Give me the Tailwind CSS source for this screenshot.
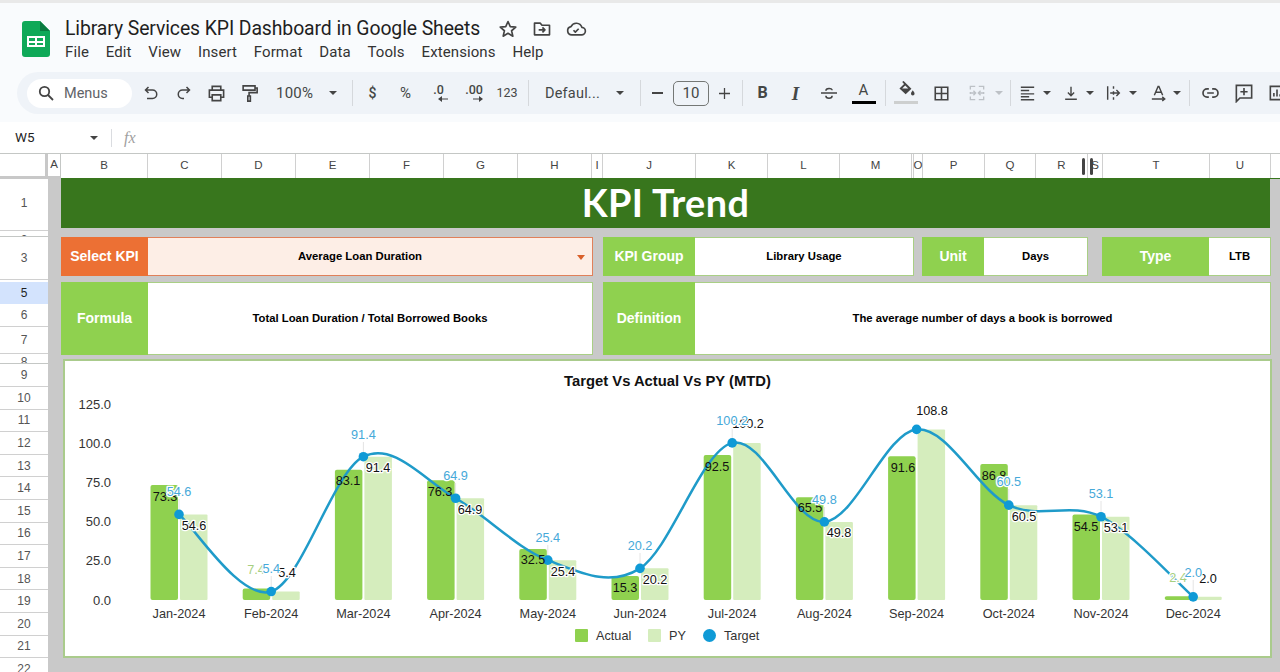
<!DOCTYPE html>
<html lang="en">
<head>
<meta charset="UTF-8">
<title>Library Services KPI Dashboard in Google Sheets</title>
<script src="https://cdn.jsdelivr.net/npm/@tailwindcss/browser@4"></script>
</head>
<body class="w-[1280px] h-[672px] overflow-hidden bg-white font-['Roboto',sans-serif] text-[#444746]">

<!-- title + menus -->
<div class="h-[72px] bg-[#f9fbfd] border-t-[3px] border-[#e9e9e9] flex pl-[22px]">
  <svg class="mt-[18px] w-[28px] h-[36px]" viewBox="0 0 28 36">
    <path d="M3 0H18L28 10V33a3 3 0 0 1-3 3H3a3 3 0 0 1-3-3V3a3 3 0 0 1 3-3z" fill="#0fa958"/>
    <path d="M18 0L28 10H18z" fill="#0a7a40"/>
    <path d="M5 15H23V26H5zM7 17V20H13V17zM15 17V20H21V17zM7 22V24H13V22zM15 22V24H21V22z" fill="#fff" fill-rule="evenodd"/>
  </svg>
  <div class="ml-[15px]">
    <div class="flex items-center h-[28px] mt-[12px]">
      <div class="text-[19.4px] text-[#1f1f1f] leading-none tracking-[-0.1px] w-[433px] whitespace-nowrap">Library Services KPI Dashboard in Google Sheets</div>
      <svg class="w-[20px] h-[20px]" viewBox="0 0 24 24" fill="none" stroke="#444" stroke-width="2" stroke-linejoin="round"><path d="M12 3l2.7 6.1 6.6.6-5 4.4 1.5 6.5L12 17.2l-5.8 3.4 1.5-6.5-5-4.4 6.6-.6z"/></svg>
      <svg class="ml-[14px] w-[20px] h-[20px]" viewBox="0 0 24 24" fill="none" stroke="#444" stroke-width="2" stroke-linejoin="round"><path d="M3 5h7l2 2.5h9V19H3z"/><path d="M8 13h7M12.5 10l3 3-3 3"/></svg>
      <svg class="ml-[13px] w-[22px] h-[20px]" viewBox="0 0 24 24" fill="none" stroke="#444" stroke-width="2" stroke-linejoin="round"><path d="M7 19a5 5 0 0 1-1-9.900A7 7 0 0 1 19 10a4.500 4.500 0 0 1-.5 9z"/><path d="M9 13.500l2.200 2.200 4-4"/></svg>
    </div>
    <div class="flex gap-[16.800px] text-[15px] leading-none mt-[2px] text-[#333] tracking-[0.1px]">
      <span>File</span><span>Edit</span><span>View</span><span>Insert</span><span>Format</span><span>Data</span><span>Tools</span><span>Extensions</span><span>Help</span>
    </div>
  </div>
</div>

<!-- toolbar -->
<div class="h-[50px] bg-[#f9fbfd] pl-[17px] pb-[8px] overflow-hidden">
  <div class="h-[42px] bg-[#eff3f8] rounded-l-[21px] flex items-center pl-[10px] text-[#444746] w-[1400px]">
    <div class="w-[105px] h-[29px] bg-white rounded-full flex items-center pl-[11px] shrink-0">
      <svg class="w-[16px] h-[16px]" viewBox="0 0 16 16" fill="none" stroke="#444" stroke-width="1.800"><circle cx="6.500" cy="6.500" r="4.700"/><path d="M10 10l5 5"/></svg>
      <span class="ml-[10px] mt-[1px] text-[14.5px] text-[#5f6368]">Menus</span>
    </div>
    <div class="ml-[2px] w-[33px] flex justify-center"><svg class="w-[16px] h-[16px]" viewBox="0 0 16 16" fill="none" stroke="#444" stroke-width="1.500"><path d="M5.500 2L2.500 5l3 3M3 5h6.500a4 4 0 0 1 0 8.500H4"/></svg></div>
    <div class="w-[33px] flex justify-center"><svg class="w-[16px] h-[16px]" viewBox="0 0 16 16" fill="none" stroke="#444" stroke-width="1.500"><path d="M10.500 2l3 3-3 3M13 5H6.500a4 4 0 0 0 0 8.500H8"/></svg></div>
    <div class="w-[33px] flex justify-center"><svg class="w-[19px] h-[19px]" viewBox="0 0 20 20" fill="none" stroke="#444" stroke-width="1.700"><path d="M5.500 6V2.500h9V6M5.500 14H2.500V6.500h15V14h-3M5.500 11.500h9v6h-9z"/></svg></div>
    <div class="w-[33px] flex justify-center"><svg class="w-[17px] h-[19px]" viewBox="0 0 20 22" fill="none" stroke="#444" stroke-width="1.900"><path d="M2.500 2h14v5h-14zM16.500 4.500H19V10H9.500v4M8 14h3v6H8z"/></svg></div>
    <div class="w-[56px] pl-[10px] mt-[1px] text-[15px] tracking-[0.2px]">100%</div>
    <div class="w-[22px] flex justify-center"><div class="w-0 h-0 border-x-[4.500px] border-x-transparent border-t-[4.500px] border-t-[#444]"></div></div>
    <div class="ml-[8px] w-px h-[26px] bg-[#d5d8dc]"></div>
    <div class="ml-[3px] w-[33px] text-center text-[14px] font-medium">$</div>
    <div class="w-[33px] text-center text-[15px]">%</div>
    <div class="w-[33px] flex flex-col items-center text-[12.500px] font-medium leading-[12px]"><span>.0</span><svg class="w-[10px] h-[6px] ml-[8px]" viewBox="0 0 10 6" fill="#444"><path d="M10 2.400H4V0L0 3l4 3V3.600h6z"/></svg></div>
    <div class="w-[38px] flex flex-col items-center text-[12.500px] font-medium leading-[12px]"><span>.00</span><svg class="w-[10px] h-[6px] ml-[8px]" viewBox="0 0 10 6" fill="#444"><path d="M0 2.400H6V0l4 3-4 3V3.600H0z"/></svg></div>
    <div class="w-[28px] text-center text-[12.500px]">123</div>
    <div class="ml-[7px] w-px h-[26px] bg-[#d5d8dc]"></div>
    <div class="ml-[16px] w-[60px] mt-[1px] text-[14.500px] tracking-[0.2px] whitespace-nowrap">Defaul...</div>
    <div class="ml-[4px] w-[22px] flex justify-center"><div class="w-0 h-0 border-x-[4.500px] border-x-transparent border-t-[4.500px] border-t-[#444]"></div></div>
    <div class="ml-[9px] w-px h-[26px] bg-[#d5d8dc]"></div>
    <div class="ml-[4px] w-[24px] flex justify-center"><div class="w-[11px] h-[1.500px] bg-[#444]"></div></div>
    <div class="ml-[4px] w-[36px] h-[25px] border border-[#747775] rounded-[5px] flex items-center justify-center text-[15px]">10</div>
    <div class="ml-[3px] w-[24px] flex justify-center"><svg class="w-[11px] h-[11px]" viewBox="0 0 13 13" stroke="#444" stroke-width="1.500"><path d="M0 6.500h13M6.500 0v13"/></svg></div>
    <div class="ml-[6px] w-px h-[26px] bg-[#d5d8dc]"></div>
    <div class="ml-[3px] w-[33px] text-center text-[16px] font-bold">B</div>
    <div class="w-[33px] text-center text-[19px] leading-none font-bold italic font-['Liberation_Serif',serif]">I</div>
    <div class="w-[33px] flex justify-center"><svg class="w-[18px] h-[16px]" viewBox="0 0 20 18" fill="none" stroke="#444" stroke-width="1.700"><path d="M1 9h18M6.500 6.500C6.500 3 13.500 3 13.500 6M6.500 12c0 3.800 7 3.800 7 0"/></svg></div>
    <div class="ml-[2px] w-[33px] h-[26px] flex flex-col items-center"><span class="text-[15px] leading-[19px] mt-[1px]">A</span><div class="w-[24px] h-[3px] bg-black mt-[1px]"></div></div>
    <div class="ml-[5px] w-px h-[26px] bg-[#d5d8dc]"></div>
    <div class="ml-[3px] w-[34px] h-[26px] flex flex-col items-center">
      <svg class="w-[18px] h-[16px] ml-[2px] mt-[1px]" viewBox="0 0 20 18" fill="#444"><path d="M5 0.500L6.200 0l2 2L15 8.800 8.500 15 1.500 8.500 6.700 3.400 5 1.700zM8 5L4.500 8.500h7z"/><path d="M16.500 10.500c1 1.500 2 2.600 2 3.800a2 2 0 0 1-4 0c0-1.200 1-2.300 2-3.800z"/></svg>
      <div class="w-[24px] h-[3px] bg-[#cdcfcf] mt-[4px]"></div>
    </div>
    <div class="ml-[1px] w-[34px] flex justify-center"><svg class="w-[15px] h-[15px]" viewBox="0 0 18 18" fill="none" stroke="#444" stroke-width="1.900"><path d="M1.500 1.500h15v15h-15zM9 1.500v15M1.500 9h15"/></svg></div>
    <div class="ml-[5px] w-[28px] flex justify-center"><svg class="w-[16px] h-[16px]" viewBox="0 0 18 18" fill="none" stroke="#bdc1c6" stroke-width="1.500"><path d="M7 1.500H1.500V5M1.500 8v2M1.500 13v3.500H7M11 1.500h5.500V5M16.500 8v2M16.500 13v3.500H11M1.500 9H7M5 6.500L7.500 9 5 11.500M16.500 9H11M13 6.500L10.500 9l2.500 2.500"/></svg></div>
    <div class="w-[16px] flex justify-center"><div class="w-0 h-0 border-x-[4.500px] border-x-transparent border-t-[4.500px] border-t-[#bdc1c6]"></div></div>
    <div class="ml-[3px] w-px h-[26px] bg-[#d5d8dc]"></div>
    <div class="ml-[3px] w-[26px] flex justify-center"><svg class="w-[15px] h-[16px]" viewBox="0 0 18 18" stroke="#444" stroke-width="1.700"><path d="M1 2h16M1 6h10M1 10h16M1 13.500h10M1 17h16"/></svg></div>
    <div class="w-[14px] flex justify-center"><div class="w-0 h-0 border-x-[4.500px] border-x-transparent border-t-[4.500px] border-t-[#444]"></div></div>
    <div class="ml-[5px] w-[24px] flex justify-center"><svg class="w-[14px] h-[16px]" viewBox="0 0 18 18" fill="none" stroke="#444" stroke-width="1.800"><path d="M1.500 17h15M9 1v11M5 8.500l4 4 4-4"/></svg></div>
    <div class="w-[14px] flex justify-center"><div class="w-0 h-0 border-x-[4.500px] border-x-transparent border-t-[4.500px] border-t-[#444]"></div></div>
    <div class="ml-[4px] w-[24px] flex justify-center"><svg class="w-[15px] h-[16px]" viewBox="0 0 18 18" fill="none" stroke="#444" stroke-width="1.700"><path d="M2 1v16M9 1v3M9 7v4M9 14v3M5 9h11M12.500 5.500L16 9l-3.500 3.500"/></svg></div>
    <div class="ml-[1px] w-[14px] flex justify-center"><div class="w-0 h-0 border-x-[4.500px] border-x-transparent border-t-[4.500px] border-t-[#444]"></div></div>
    <div class="ml-[6px] w-[24px] flex justify-center"><svg class="w-[15px] h-[17px]" viewBox="0 0 18 20" fill="none" stroke="#444" stroke-width="1.700"><path d="M4 12L8.500 1.500h1L14 12M5.500 8.500h7M1 16.500h15M13.500 14l3 2.500-3 2.500"/></svg></div>
    <div class="w-[14px] flex justify-center"><div class="w-0 h-0 border-x-[4.500px] border-x-transparent border-t-[4.500px] border-t-[#444]"></div></div>
    <div class="ml-[5px] w-px h-[26px] bg-[#d5d8dc]"></div>
    <div class="ml-[4px] w-[33px] flex justify-center"><svg class="w-[17px] h-[10px]" viewBox="0 0 20 12" fill="none" stroke="#444" stroke-width="2"><path d="M8 1H6a5 5 0 0 0 0 10h2M12 1h2a5 5 0 0 1 0 10h-2M6 6h8"/></svg></div>
    <div class="w-[33px] flex justify-center"><svg class="w-[18px] h-[19px]" viewBox="0 0 20 21" fill="none" stroke="#444" stroke-width="1.800"><path d="M1.500 1.500h17v14H5.500l-4 4zM10 4.500v8M6 8.500h8"/></svg></div>
    <div class="w-[33px] flex justify-center"><svg class="w-[16px] h-[16px]" viewBox="0 0 18 18" fill="none" stroke="#444" stroke-width="1.800"><path d="M1.500 1.500h15v15h-15zM5.500 13V9M9 13V5M12.500 13v-2.500"/></svg></div>
  </div>
</div>

<!-- formula bar -->
<div class="h-[31px] bg-white flex items-center text-[13.500px] text-[#1f1f1f]">
  <div class="w-[90px] pl-[15px]">W5</div>
  <div class="w-0 h-0 border-x-[4.500px] border-x-transparent border-t-[4.500px] border-t-[#444]"></div>
  <div class="ml-[13px] w-px h-[18px] bg-[#dadce0]"></div>
  <div class="ml-[12px] text-[16px] italic text-[#a0a0a0] font-['Liberation_Serif',serif]">fx</div>
</div>

<!-- column headers -->
<div class="h-[26px] flex bg-white border-t border-[#c4c7c5] text-[11.500px] text-[#444] font-['Liberation_Sans',sans-serif] overflow-hidden relative">
  <div class="w-[45px] shrink-0 border-b-[3px] border-[#c8c8c8]"></div>
  <div class="w-[3px] shrink-0 bg-[#c8c8c8]"></div>
  <div class="w-[13px] shrink-0 flex items-center justify-center border-r border-[#c4c7c5] border-b-[3px] border-b-[#c8c8c8]">A</div>
  <div class="flex flex-1 border-b border-[#38761d]">
    <div class="w-[87px] shrink-0 flex items-center justify-center border-r border-[#d0d0d0]">B</div>
    <div class="w-[74px] shrink-0 flex items-center justify-center border-r border-[#d0d0d0]">C</div>
    <div class="w-[74px] shrink-0 flex items-center justify-center border-r border-[#d0d0d0]">D</div>
    <div class="w-[74px] shrink-0 flex items-center justify-center border-r border-[#d0d0d0]">E</div>
    <div class="w-[74px] shrink-0 flex items-center justify-center border-r border-[#d0d0d0]">F</div>
    <div class="w-[74px] shrink-0 flex items-center justify-center border-r border-[#d0d0d0]">G</div>
    <div class="w-[74px] shrink-0 flex items-center justify-center border-r border-[#d0d0d0]">H</div>
    <div class="w-[11px] shrink-0 flex items-center justify-center border-r border-[#d0d0d0]">I</div>
    <div class="w-[93px] shrink-0 flex items-center justify-center border-r border-[#d0d0d0]">J</div>
    <div class="w-[72px] shrink-0 flex items-center justify-center border-r border-[#d0d0d0]">K</div>
    <div class="w-[72px] shrink-0 flex items-center justify-center border-r border-[#d0d0d0]">L</div>
    <div class="w-[72px] shrink-0 flex items-center justify-center border-r border-[#d0d0d0]">M</div>
    <div class="w-[2px] shrink-0 border-r border-[#d0d0d0]"></div>
    <div class="w-[9px] shrink-0 flex items-center justify-center border-r border-[#d0d0d0]">O</div>
    <div class="w-[62px] shrink-0 flex items-center justify-center border-r border-[#d0d0d0]">P</div>
    <div class="w-[51px] shrink-0 flex items-center justify-center border-r border-[#d0d0d0]">Q</div>
    <div class="w-[52px] shrink-0 flex items-center justify-center border-r border-[#d0d0d0]">R</div>
    <div class="w-[15px] shrink-0 flex items-center justify-center border-r border-[#d0d0d0]">S</div>
    <div class="w-[107px] shrink-0 flex items-center justify-center border-r border-[#d0d0d0]">T</div>
    <div class="w-[61px] shrink-0 flex items-center justify-center border-r border-[#d0d0d0]">U</div>
  </div>
  <!-- column resize handle -->
  <div class="absolute left-[1082px] top-[4px] w-[3px] h-[17px] rounded-full bg-[#444]"></div>
  <div class="absolute left-[1090px] top-[4px] w-[3px] h-[17px] rounded-full bg-[#444]"></div>
</div>

<!-- sheet -->
<div class="flex h-[493px] overflow-hidden">
  <div class="w-[48px] shrink-0 bg-white text-[12px] text-[#555] font-['Liberation_Sans',sans-serif] text-center">
    <div class="h-[52px] pb-[3px] border-b border-[#d0d0d0] flex items-center justify-center">1</div>
    <div class="h-[6px] border-b border-[#c4c7c5] overflow-hidden leading-[18px]">2</div>
    <div class="h-[43px] border-b border-[#d0d0d0] flex items-center justify-center">3</div>
    <div class="h-[2px] overflow-hidden leading-[14px]">4</div>
    <div class="h-[22px] bg-[#d3e3fd] text-[#1f1f1f] flex items-center justify-center">5</div>
    <div class="h-[23px] border-b border-[#d0d0d0] flex items-center justify-center">6</div>
    <div class="h-[27px] border-b border-[#d0d0d0] flex items-center justify-center">7</div>
    <div class="h-[10px] border-b border-[#c4c7c5] overflow-hidden leading-[16px]">8</div>
    <div class="h-[23px] border-b border-[#d0d0d0] flex items-center justify-center">9</div>
    <div class="h-[22.600px] border-b border-[#d0d0d0] flex items-center justify-center">10</div>
    <div class="h-[22.600px] border-b border-[#d0d0d0] flex items-center justify-center">11</div>
    <div class="h-[22.600px] border-b border-[#d0d0d0] flex items-center justify-center">12</div>
    <div class="h-[22.600px] border-b border-[#d0d0d0] flex items-center justify-center">13</div>
    <div class="h-[22.600px] border-b border-[#d0d0d0] flex items-center justify-center">14</div>
    <div class="h-[22.600px] border-b border-[#d0d0d0] flex items-center justify-center">15</div>
    <div class="h-[22.600px] border-b border-[#d0d0d0] flex items-center justify-center">16</div>
    <div class="h-[22.600px] border-b border-[#d0d0d0] flex items-center justify-center">17</div>
    <div class="h-[22.600px] border-b border-[#d0d0d0] flex items-center justify-center">18</div>
    <div class="h-[22.600px] border-b border-[#d0d0d0] flex items-center justify-center">19</div>
    <div class="h-[22.600px] border-b border-[#d0d0d0] flex items-center justify-center">20</div>
    <div class="h-[22.600px] border-b border-[#d0d0d0] flex items-center justify-center">21</div>
    <div class="h-[22.600px] flex items-center justify-center">22</div>
  </div>

  <div class="flex-1 bg-[#c9c9c9] pl-[13px] font-['Liberation_Sans',sans-serif]">
    <div class="w-[1209px] h-[49px] pb-[1px] bg-[#38761d] flex items-center justify-center text-white text-[37.800px] font-['Lato',sans-serif] font-bold leading-none tracking-[0.4px]">KPI Trend</div>

    <div class="mt-[9px] h-[39px] flex">
      <div class="w-[87px] bg-[#ec7034] text-white font-bold text-[14px] flex items-center justify-center">Select KPI</div>
      <div class="w-[445px] bg-[#fdeee6] border border-[#e0805a] border-l-0 flex items-center justify-center pr-[20px] text-[11.300px] font-bold text-black relative">
        Average Loan Duration
        <div class="absolute right-[7px] top-[17px] w-0 h-0 border-x-[4px] border-x-transparent border-t-[5px] border-t-[#d9602a]"></div>
      </div>
      <div class="ml-[10px] w-[92px] bg-[#8fd14f] text-white font-bold text-[14px] flex items-center justify-center">KPI Group</div>
      <div class="w-[219px] bg-white border border-[#a9cf85] border-l-0 flex items-center justify-center text-[11.300px] font-bold text-black">Library Usage</div>
      <div class="ml-[8px] w-[62px] bg-[#8fd14f] text-white font-bold text-[14px] flex items-center justify-center">Unit</div>
      <div class="w-[104px] bg-white border border-[#a9cf85] border-l-0 flex items-center justify-center text-[11.300px] font-bold text-black">Days</div>
      <div class="ml-[14px] w-[107px] bg-[#8fd14f] text-white font-bold text-[14px] flex items-center justify-center">Type</div>
      <div class="w-[62px] bg-white border border-[#a9cf85] border-l-0 flex items-center justify-center text-[11.300px] font-bold text-black">LTB</div>
    </div>

    <div class="mt-[6px] h-[73px] flex">
      <div class="w-[87px] bg-[#8fd14f] text-white font-bold text-[14px] flex items-center justify-center">Formula</div>
      <div class="w-[445px] bg-white border border-[#a9cf85] border-l-0 flex items-center justify-center text-[11.300px] font-bold text-black">Total Loan Duration / Total Borrowed Books</div>
      <div class="ml-[10px] w-[92px] bg-[#8fd14f] text-white font-bold text-[14px] flex items-center justify-center">Definition</div>
      <div class="w-[576px] bg-white border border-[#a9cf85] border-l-0 flex items-center justify-center text-[11.300px] font-bold text-black">The average number of days a book is borrowed</div>
    </div>

    <div class="mt-[4px] ml-[2px] w-[1209px] h-[299px] bg-white border-2 border-[#aacb8c]">
      <svg id="chart" class="block w-[1205px] h-[295px]" viewBox="65 361 1205 295" font-family="'Liberation Sans', sans-serif" text-anchor="middle" dominant-baseline="central"></svg>
    </div>
  </div>
</div>

<script>
  const months = ['Jan','Feb','Mar','Apr','May','Jun','Jul','Aug','Sep','Oct','Nov','Dec'];
  const actual = [73.3, 7.4, 83.1, 76.3, 32.5, 15.3, 92.5, 65.5, 91.6, 86.8, 54.5, 2.4];
  const target = [54.6, 5.4, 91.4, 64.9, 25.4, 20.2, 100.2, 49.8, 108.8, 60.5, 53.1, 2.0];
  // label positions read off the picture: [x, y]
  const actualPos = [[165,497],[256,570],[348,481],[440,492],[533,560],[625,588],[717,467],[810,508],[903,468],[994,476],[1086,527],[1178,578]];
  const pyPos = [[194,526],[287,573],[378,468],[470,510],[563,572],[655,580],[748,424],[839,533],[932,411],[1024,517],[1116,528],[1208,579]];
  const targetY = [492,569,435,476,538,546,421,500,null,482,494,573];

  const X = i => 179 + i * 92.2;
  const Y = v => 600 - v * 1.568;
  const halo = 'stroke="#fff" stroke-width="2.5" paint-order="stroke" stroke-linejoin="round"';
  let s = '';

  s += '<text x="667.5" y="381" font-size="14.8" font-weight="bold" fill="#111">Target Vs Actual Vs PY (MTD)</text>';

  ['0.0','25.0','50.0','75.0','100.0','125.0'].forEach((t, i) => {
    s += `<text x="111" y="${600 - i * 39.2}" font-size="13" fill="#333" text-anchor="end">${t}</text>`;
  });

  months.forEach((m, i) => {
    const x = X(i);
    s += `<rect x="${x - 28.5}" y="${Y(actual[i])}" width="27.5" height="${actual[i] * 1.568}" rx="2" fill="#8fd14f"/>`;
    s += `<rect x="${x + 1}" y="${Y(target[i])}" width="27.5" height="${target[i] * 1.568}" rx="1" fill="#d5edbd"/>`;
    s += `<text x="${x}" y="613.5" font-size="12.7" fill="#333">${m}-2024</text>`;
  });

  // smooth line through the targets
  const pts = target.map((v, i) => [X(i), Y(v)]);
  let d = `M${pts[0][0]} ${pts[0][1]}`;
  for (let i = 0; i < pts.length - 1; i++) {
    const p0 = pts[Math.max(i - 1, 0)], p1 = pts[i], p2 = pts[i + 1], p3 = pts[Math.min(i + 2, pts.length - 1)];
    d += ` C${p1[0] + (p2[0] - p0[0]) / 6} ${p1[1] + (p2[1] - p0[1]) / 6} ${p2[0] - (p3[0] - p1[0]) / 6} ${p2[1] - (p3[1] - p1[1]) / 6} ${p2[0]} ${p2[1]}`;
  }
  targetY.forEach((y, i) => {
    if (y !== null && y < pts[i][1]) s += `<line x1="${pts[i][0]}" x2="${pts[i][0]}" y1="${y + 7}" y2="${pts[i][1]}" stroke="#e4e4e4"/>`;
  });
  s += `<path d="${d}" fill="none" stroke="#1f9bc9" stroke-width="2.5"/>`;
  pts.forEach(p => { s += `<circle cx="${p[0]}" cy="${p[1]}" r="4.8" fill="#0f9ad6"/>`; });

  actual.forEach((v, i) => {
    const out = i === 1 || i === 11;
    s += `<text x="${actualPos[i][0]}" y="${actualPos[i][1]}" font-size="12.7" fill="${out ? '#a6cf80' : '#111'}" ${out ? halo : ''}>${v.toFixed(1)}</text>`;
  });
  target.forEach((v, i) => {
    s += `<text x="${pyPos[i][0]}" y="${pyPos[i][1]}" font-size="12.7" fill="#111" ${halo}>${v.toFixed(1)}</text>`;
  });
  target.forEach((v, i) => {
    if (targetY[i] !== null) s += `<text x="${X(i)}" y="${targetY[i]}" font-size="12.7" fill="#46a9d9" ${halo}>${v.toFixed(1)}</text>`;
  });

  // legend
  s += '<rect x="575" y="629" width="13" height="13" rx="1" fill="#8fd14f"/><text x="596" y="635.5" font-size="12.7" fill="#333" text-anchor="start">Actual</text>';
  s += '<rect x="648" y="629" width="13" height="13" rx="1" fill="#d5edbd"/><text x="669" y="635.5" font-size="12.7" fill="#333" text-anchor="start">PY</text>';
  s += '<circle cx="709.5" cy="635.5" r="6.5" fill="#0f9ad6"/><text x="724" y="635.5" font-size="12.7" fill="#333" text-anchor="start">Target</text>';

  document.getElementById('chart').innerHTML = s;
</script>
</body>
</html>
